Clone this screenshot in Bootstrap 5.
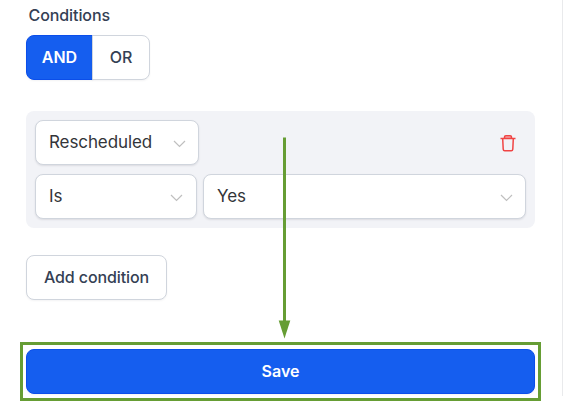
<!DOCTYPE html>
<html lang="en">
<head>
<meta charset="utf-8">
<meta name="viewport" content="width=device-width, initial-scale=1">
<title>Conditions</title>
<link rel="stylesheet" href="https://cdn.jsdelivr.net/npm/bootstrap@5.3.0/dist/css/bootstrap.min.css">
<style>
body{font-family:Inter,"Liberation Sans",sans-serif;font-size:16px;line-height:24px;color:#344054;background:#fff;min-height:412px}
.pane{width:563px;height:396px;padding:3px 27px 0 26px;border-right:1px solid #e9eaec}
.form-title{padding-left:2.5px;font-weight:500;letter-spacing:-.08px;margin-bottom:8px}
.btn{height:45px;font-weight:500;font-size:16px;border-radius:8px;padding:0 0 2px;box-shadow:0 1px 2px rgba(16,24,40,.05)}
.btn-primary{--bs-btn-bg:#155eef;--bs-btn-border-color:#0b4eea;font-weight:600}
.btn-outline-secondary{--bs-btn-color:#344054;--bs-btn-border-color:#d0d5dd;background:#fff}
.w-and{width:67px}.w-or{width:58px}
.rule-box{background:#f2f3f7;border-radius:8px;padding:9px;margin-top:31px;height:117px;gap:9px}
.picker{height:45px;border:1px solid #d0d5dd;border-radius:8px;background:#fff;color:#333539;padding:0 12px 0 13px;box-shadow:0 1px 2px rgba(16,24,40,.1);font-size:17px;letter-spacing:-.1px}
.picker span{margin-top:-2px}
.picker svg{margin-top:2px}
.w-field{width:164px}.w-op{width:162px;margin-right:6px;padding-right:13px}
.trash{margin-right:9px}
.add-btn{width:141px;margin-top:27px;letter-spacing:-.1px}
.save-frame{border:3px solid #669d34;padding:4px 3px;margin:42px -6px 0;height:59px}
.arrow-mark{position:absolute;left:278px;top:137px;pointer-events:none}
</style>
<script src="https://cdn.jsdelivr.net/npm/bootstrap@5.3.0/dist/js/bootstrap.bundle.min.js"></script>
</head>
<body>
<main class="pane position-relative">
  <div class="form-title">Conditions</div>
  <div class="btn-group d-flex" role="group">
    <button class="btn btn-primary flex-grow-0 w-and">AND</button>
    <button class="btn btn-outline-secondary flex-grow-0 w-or">OR</button>
  </div>
  <section class="rule-box d-flex flex-column">
    <div class="d-flex align-items-center justify-content-between">
      <div class="picker w-field d-flex align-items-center justify-content-between"><span>Rescheduled</span>
        <svg width="13" height="8" fill="none" stroke="#bfbfbf" stroke-width="1.2"><path d="M1 1l5.5 5.5L12 1"/></svg></div>
      <svg class="trash" width="18" height="20" viewBox="0 0 18 20" fill="none" stroke="#f04444" stroke-width="1.5" stroke-linejoin="round"><path d="M1.5 5.5h15M5.5 5.2V4.1q0-1.4 1.4-1.4h4.2q1.4 0 1.4 1.4v1.1M3.7 5.5l.5 10.8q.1 1.5 1.5 1.5h6.6q1.4 0 1.5-1.5l.5-10.8"/><path d="M5.8 4.2h6.4" stroke-opacity=".5"/></svg>
    </div>
    <div class="d-flex">
      <div class="picker w-op d-flex align-items-center justify-content-between"><span>Is</span>
        <svg width="13" height="8" fill="none" stroke="#bfbfbf" stroke-width="1.2"><path d="M1 1l5.5 5.5L12 1"/></svg></div>
      <div class="picker flex-grow-1 d-flex align-items-center justify-content-between"><span>Yes</span>
        <svg width="13" height="8" fill="none" stroke="#bfbfbf" stroke-width="1.2"><path d="M1 1l5.5 5.5L12 1"/></svg></div>
    </div>
  </section>
  <button class="btn btn-outline-secondary d-block add-btn">Add condition</button>
  <div class="save-frame"><button class="btn btn-primary d-block w-100">Save</button></div>
  <svg class="arrow-mark" width="14" height="202"><path d="M5 .5h3V184H5z" fill="#669d34"/><path d="M.7 183.5h11.6L6.5 201.5z" fill="#669d34"/></svg>
</main>
</body>
</html>
